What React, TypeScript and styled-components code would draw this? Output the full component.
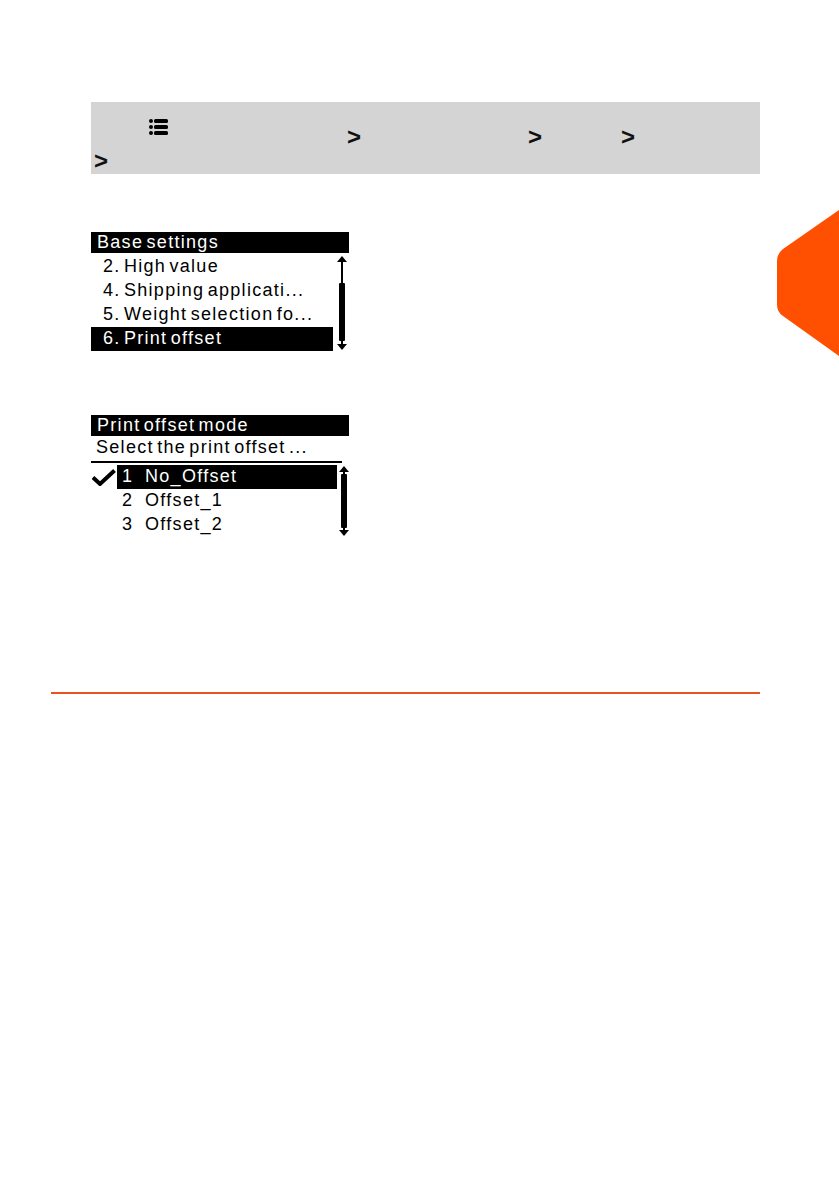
import React from "react";
import styled, { createGlobalStyle } from "styled-components";

const GlobalStyle = createGlobalStyle`
   html, body {
      margin: 0;
      padding: 0;
      background: #ffffff;
   }
   body {
      font-family: "Liberation Sans", Arial, sans-serif;
   }
`;

const Page = styled.div`
   position: relative;
   width: 839px;
   min-height: 1191px;
   overflow: hidden;
   background: #ffffff;
`;

const Main = styled.div`
   display: flex;
   flex-direction: column;
   padding: 102px 0 0 91px;
`;

const Tab = styled.svg`
   position: absolute;
   top: 210px;
   right: 0;
`;

const NavBox = styled.div`
   width: 669px;
   height: 72px;
   box-sizing: border-box;
   padding-top: 14px;
   background: #d4d4d4;
   display: flex;
   flex-direction: column;
`;

const NavLine = styled.div<{ $h: number; $pl?: number }>`
   display: flex;
   align-items: flex-start;
   height: ${(p) => p.$h}px;
   padding-left: ${(p) => p.$pl || 0}px;
`;

const Spacer = styled.span<{ $w: number }>`
   flex: none;
   width: ${(p) => p.$w}px;
`;

const Chevron = styled.span<{ $top: number }>`
   flex: none;
   margin-top: ${(p) => p.$top}px;
   font-family: "Liberation Sans", Arial, sans-serif;
   font-weight: bold;
   font-size: 24px;
   line-height: 22px;
   color: #111111;
`;

const MenuIcon = styled.svg`
   flex: none;
   margin-top: 2px;
`;

const Screen = styled.div<{ $mt: number }>`
   width: 258px;
   margin-top: ${(p) => p.$mt}px;
   font-family: "Liberation Sans", Arial, sans-serif;
   font-size: 18px;
   letter-spacing: 1.3px;
   word-spacing: -3px;
   color: #000000;
`;

const ScreenHeader = styled.div`
   height: 21px;
   line-height: 21px;
   padding-left: 6px;
   background: #000000;
   color: #ffffff;
   white-space: nowrap;
`;

const ScreenBody = styled.div<{ $pt: number }>`
   display: grid;
   grid-template-columns: 242px 16px;
   padding-top: ${(p) => p.$pt}px;
`;

const RowList = styled.div`
   display: flex;
   flex-direction: column;
`;

const Row = styled.div<{ $active?: boolean }>`
   height: 24px;
   line-height: 22px;
   padding-left: 12px;
   white-space: nowrap;
   background: ${(p) => (p.$active ? "#000000" : "transparent")};
   color: ${(p) => (p.$active ? "#ffffff" : "#000000")};
`;

const Prompt = styled.div`
   height: 25px;
   line-height: 23px;
   padding-left: 5px;
   white-space: nowrap;
   border-bottom: 2px solid #000000;
   width: 246px;
`;

const OptionBody = styled.div`
   display: grid;
   grid-template-columns: 26px 220px 12px;
   padding-top: 2px;
`;

const CheckColumn = styled.div`
   display: flex;
   flex-direction: column;
`;

const CheckCell = styled.div`
   height: 24px;
   display: flex;
   align-items: center;
   padding-left: 1px;
`;

const OptionList = styled.div`
   display: flex;
   flex-direction: column;
`;

const Option = styled.div<{ $active?: boolean }>`
   height: 24px;
   line-height: 22px;
   display: flex;
   padding-left: 5px;
   white-space: nowrap;
   background: ${(p) => (p.$active ? "#000000" : "transparent")};
   color: ${(p) => (p.$active ? "#ffffff" : "#000000")};
`;

const OptionNum = styled.span`
   width: 23px;
   flex: none;
`;

const Rule = styled.div`
   width: 709px;
   height: 2px;
   margin: 155px 0 0 51px;
   background: #e9521f;
`;

const ListIcon = () => (
   <MenuIcon width="19" height="18" viewBox="0 0 19 18">
      <circle cx="2" cy="3" r="2" fill="#000" />
      <circle cx="2" cy="9" r="2" fill="#000" />
      <circle cx="2" cy="15" r="2" fill="#000" />
      <rect x="5" y="1" width="14" height="4" rx="1.5" fill="#000" />
      <rect x="5" y="7" width="14" height="4" rx="1.5" fill="#000" />
      <rect x="5" y="13" width="14" height="4" rx="1.5" fill="#000" />
   </MenuIcon>
);

const ScrollBar: React.FC<{ height: number; cx: number; thumbStart: number; thumbEnd: number }> = ({
   height,
   cx,
   thumbStart,
   thumbEnd,
}) => (
   <svg width="16" height={height} viewBox={`0 0 16 ${height}`}>
      <polygon points={`${cx},1 ${cx - 5},7 ${cx + 5},7`} fill="#000" />
      <rect x={cx - 1} y="7" width="2" height={height - 14} fill="#000" />
      <rect x={cx - 3} y={thumbStart} width="6" height={thumbEnd - thumbStart} rx="1" fill="#000" />
      <polygon points={`${cx},${height - 1} ${cx - 5},${height - 7} ${cx + 5},${height - 7}`} fill="#000" />
   </svg>
);

const CheckMark = () => (
   <svg width="24" height="17" viewBox="0 0 24 17">
      <path d="M1 8.5 L8 15 L22.5 1.5" fill="none" stroke="#000" strokeWidth="4" strokeLinejoin="miter" />
   </svg>
);

const App: React.FC = () => {
   const baseRows = ["2. High value", "4. Shipping applicati...", "5. Weight selection fo...", "6. Print offset"];
   const options = ["No_Offset", "Offset_1", "Offset_2"];

   return (
      <Page>
         <GlobalStyle />
         <Tab width="62" height="146" viewBox="0 0 62 146">
            <path d="M62 0 L6 39 Q0 43.5 0 51 L0 95 Q0 102 6 106 L62 146 Z" fill="#fe5000" />
         </Tab>
         <Main>
            <NavBox>
               <NavLine $h={32}>
                  <Spacer $w={58} />
                  <ListIcon />
                  <Spacer $w={179} />
                  <Chevron $top={10}>&gt;</Chevron>
                  <Spacer $w={167} />
                  <Chevron $top={10}>&gt;</Chevron>
                  <Spacer $w={79} />
                  <Chevron $top={10}>&gt;</Chevron>
               </NavLine>
               <NavLine $h={26} $pl={3}>
                  <Chevron $top={2}>&gt;</Chevron>
               </NavLine>
            </NavBox>

            <Screen $mt={58}>
               <ScreenHeader>Base settings</ScreenHeader>
               <ScreenBody $pt={2}>
                  <RowList>
                     {baseRows.map((r, i) => (
                        <Row key={r} $active={i === baseRows.length - 1}>
                           {r}
                        </Row>
                     ))}
                  </RowList>
                  <ScrollBar height={96} cx={9} thumbStart={28} thumbEnd={86} />
               </ScreenBody>
            </Screen>

            <Screen $mt={64}>
               <ScreenHeader>Print offset mode</ScreenHeader>
               <Prompt>Select the print offset ...</Prompt>
               <OptionBody>
                  <CheckColumn>
                     <CheckCell>
                        <CheckMark />
                     </CheckCell>
                  </CheckColumn>
                  <OptionList>
                     {options.map((o, i) => (
                        <Option key={o} $active={i === 0}>
                           <OptionNum>{i + 1}</OptionNum>
                           {o}
                        </Option>
                     ))}
                  </OptionList>
                  <ScrollBar height={72} cx={7} thumbStart={9} thumbEnd={63} />
               </OptionBody>
            </Screen>
         </Main>
         <Rule />
      </Page>
   );
};

export default App;
